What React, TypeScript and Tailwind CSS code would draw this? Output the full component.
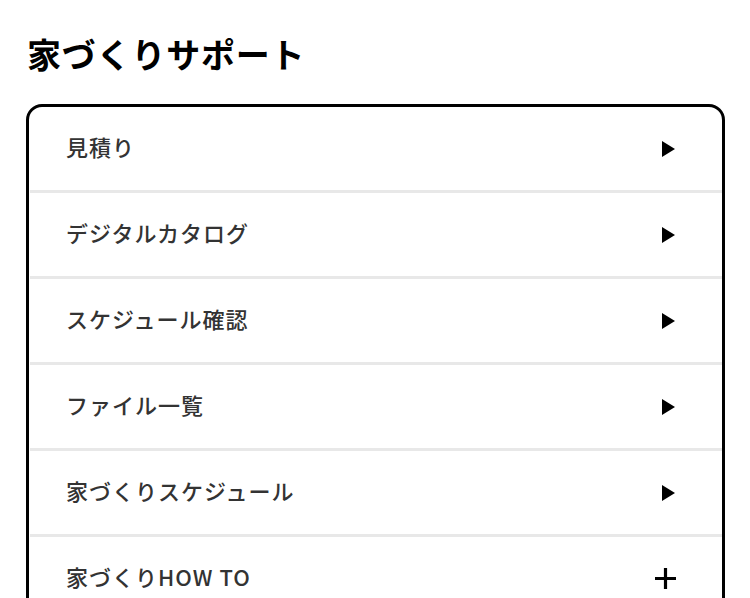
const items = [
  { label: "見積り", icon: "arrow" },
  { label: "デジタルカタログ", icon: "arrow" },
  { label: "スケジュール確認", icon: "arrow" },
  { label: "ファイル一覧", icon: "arrow" },
  { label: "家づくりスケジュール", icon: "arrow" },
  { label: "家づくりHOW TO", icon: "plus" },
];

function Arrow() {
  return (
    <svg width="13" height="16" viewBox="0 0 13 16" className="block">
      <path d="M0 0 L13 8 L0 16 Z" fill="#000" />
    </svg>
  );
}

function Plus() {
  return (
    <svg width="21" height="21" viewBox="0 0 21 21" className="block">
      <path d="M10.5 0 V21 M0 10.5 H21" stroke="#000" strokeWidth="3.2" />
    </svg>
  );
}

export default function App() {
  return (
    <div
      className="min-h-screen bg-white pl-[26px] pr-[25px] pt-[30px]"
      style={{ fontFamily: '"Noto Sans CJK JP", "Noto Sans", sans-serif' }}
    >
      <h1 className="pl-[1px] text-[34px] font-bold leading-[48px] tracking-[0.8px] text-black">
        家づくりサポート
      </h1>
      <div className="mt-[26px] overflow-hidden rounded-[16px] border-[3px] border-black">
        {items.map((item, i) => (
          <div key={item.label}>
            {i > 0 && <div className="ml-[1px] h-[3px] bg-[#e8e8e8]" />}
            <div className="flex h-[83px] items-center justify-between pl-[37px] pr-[47px]">
              <span className="pb-[6px] text-[22px] font-medium leading-[30px] tracking-[1px] text-[#333]">
                {item.label}
              </span>
              {item.icon === "arrow" ? (
                <div className="mt-[1px]"><Arrow /></div>
              ) : (
                <div className="mr-[-1px]"><Plus /></div>
              )}
            </div>
          </div>
        ))}
      </div>
    </div>
  );
}
